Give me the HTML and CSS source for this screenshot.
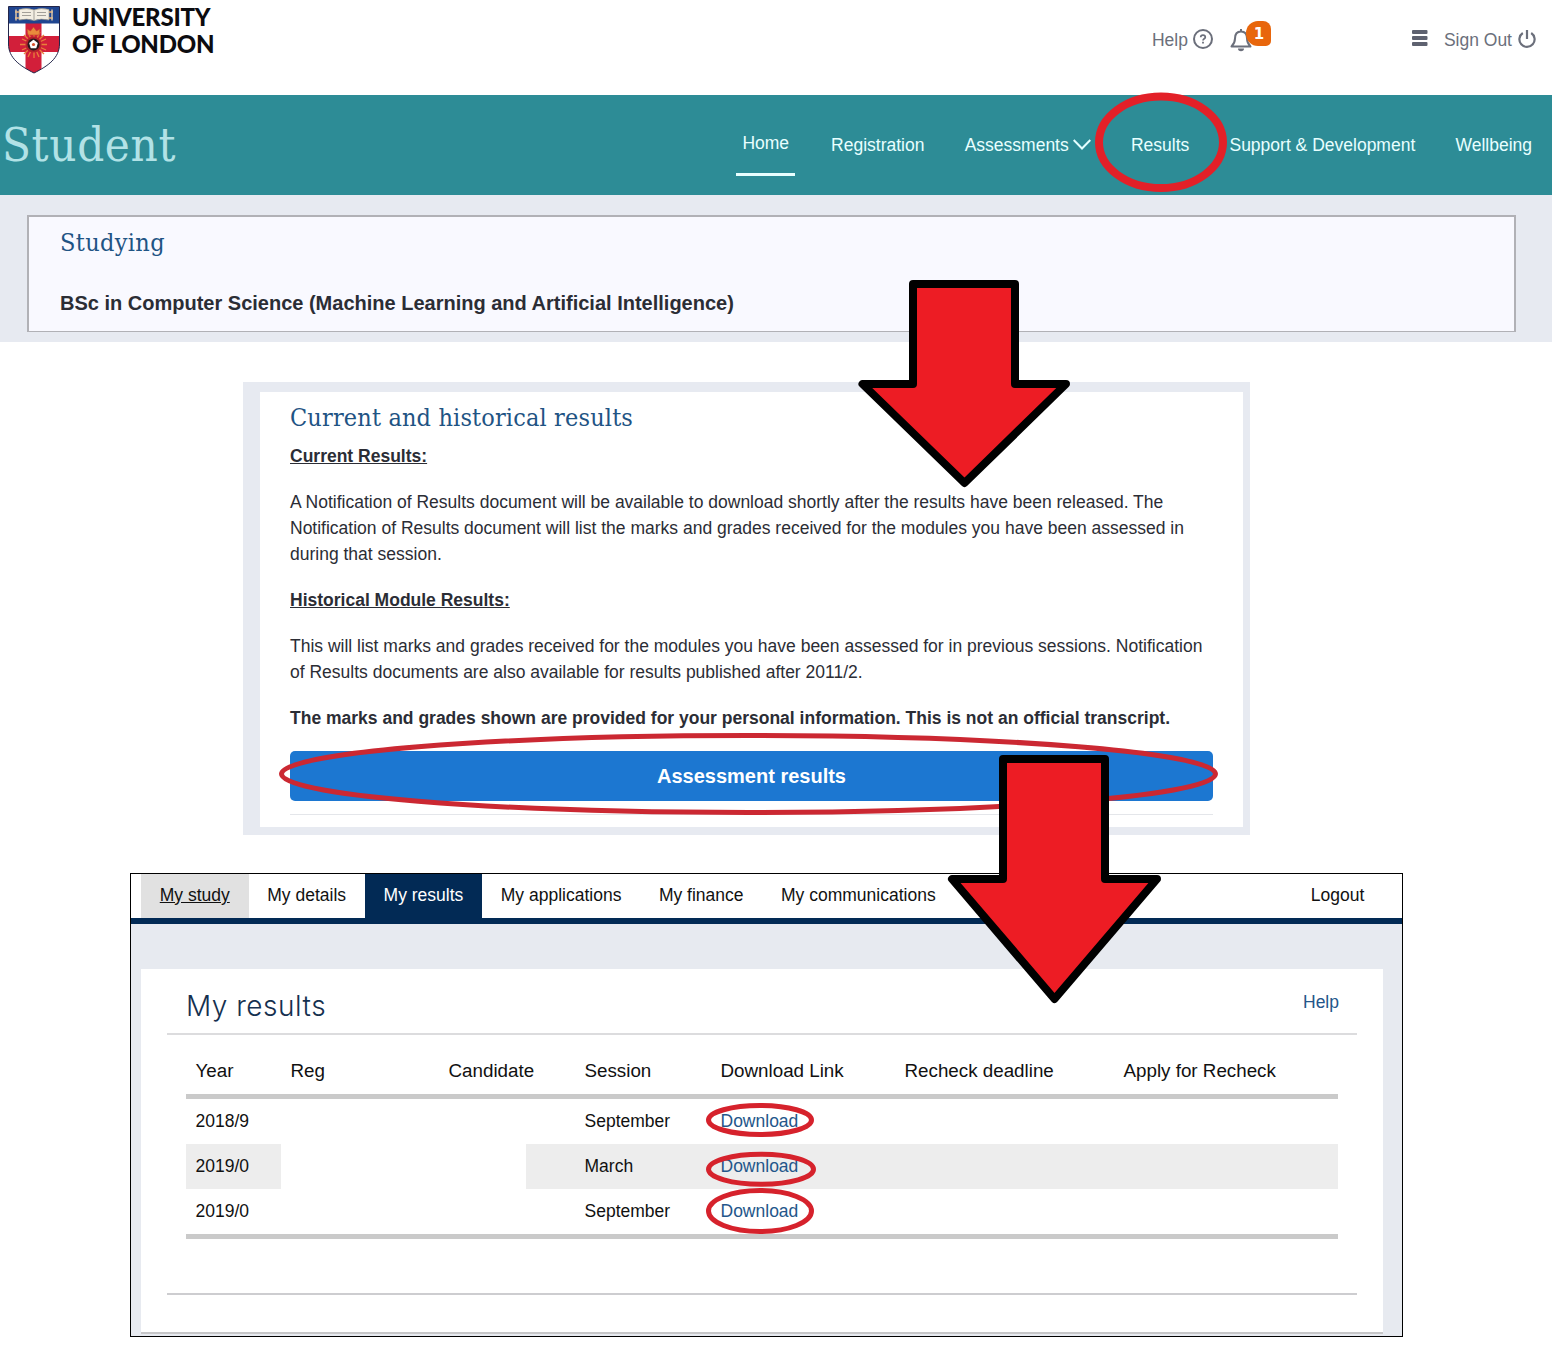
FILE: index.html
```html
<!DOCTYPE html>
<html lang="en">
<head>
<meta charset="utf-8">
<title>Student portal results</title>
<link rel="stylesheet" href="styles.css">
</head>
<body>
<header class="topbar">
  <div class="brand">
    <svg class="crest" width="52" height="68" viewBox="0 0 52 68">
      <defs><clipPath id="shield"><path d="M.5 .5H51.500V38C51.500 52 40 60 26 67C12 60 .5 52 .5 38Z"/></clipPath></defs>
      <g clip-path="url(#shield)">
        <rect width="52" height="68" fill="#fff"/>
        <rect x="17.500" y="17" width="16" height="51" fill="#d21f3a"/>
        <rect y="30" width="52" height="16" fill="#d21f3a"/>
        <rect width="52" height="17.500" fill="#1f4590"/>
      </g>
      <path d="M7 6h38M7 12h38" stroke="#c39a76" stroke-width="2"/>
      <path d="M8 3.500v11M44 3.500v11" stroke="#d9c3a8" stroke-width="1.500"/>
      <path d="M11 3.500Q19 1.500 26 4Q33 1.500 41 3.500V14Q33 12 26 14.500Q19 12 11 14Z" fill="#f3eee2" stroke="#a9a08c" stroke-width=".7"/>
      <path d="M26 4.500V14M14 6.500h9M14 9.500h9M29 6.500h9M29 9.500h9" stroke="#8e8b86" stroke-width=".8" fill="none"/>
      <g stroke="#e8803a" stroke-width="1.300"><path d="M26 25V52M12 38.500H39M16 29L36 48M36 29L16 48M20 26L31 51M32 26L20 51M14 33L38 44M38 33L14 44"/></g>
      <path d="M20 29L19 23L22.500 25L25.500 21L28.500 25L32 23L31 29Z" fill="#e98b3c" stroke="#c4472c" stroke-width=".6"/>
      <circle cx="25.500" cy="38.500" r="8" fill="#b3202c"/><circle cx="25.500" cy="38.500" r="6" fill="#2a1a1c"/>
      <path d="M25.500 34.500L29 37.300L27.700 41.500H23.300L22 37.300Z" fill="#fff" stroke="#fff" stroke-width="1.500" stroke-linejoin="round"/>
      <circle cx="25.500" cy="38.500" r="1.600" fill="#d9532f"/>
      <path d="M.5 .5H51.500V38C51.500 52 40 60 26 67C12 60 .5 52 .5 38Z" fill="none" stroke="#23264a"/>
    </svg>
    <div class="wordmark">UNIVERSITY<br>OF LONDON</div>
  </div>
  <div class="tools">
    <span>Help</span>
    <svg class="ic-help" width="20" height="20" viewBox="0 0 20 20" fill="none" stroke="#6b6f7b"><circle cx="10" cy="10" r="9" stroke-width="2"/><path d="M7.700 8.300C7.700 5.400 12.300 5.500 12.300 8.200C12.300 9.700 10 9.800 10 11.500" stroke-width="1.700"/><path d="M10 12.800v1.700" stroke-width="1.800"/></svg>
    <div class="bell">
      <svg width="22" height="24" viewBox="0 0 22 24" fill="none" stroke="#6b6f7b"><path d="M11 1v2.500M1.500 18.500C4 16 5 14 5 10.500C5 6 7.500 3.500 11 3.500S17 6 17 10.500C17 14 18 16 20.500 18.500Z" stroke-width="2" stroke-linejoin="round"/><path d="M8 20.500a3 2.800 0 0 0 6 0Z" fill="#6b6f7b" stroke="none"/></svg>
      <span class="badge">1</span>
    </div>
    <svg class="ic-menu" width="16" height="17" viewBox="0 0 16 17" fill="#5e6270"><rect y="0" width="15.500" height="4" rx="1"/><rect y="6" width="15.500" height="4" rx="1"/><rect y="12" width="15.500" height="4" rx="1"/></svg>
    <span>Sign Out</span>
    <svg class="ic-power" width="18" height="20" viewBox="0 0 18 20" fill="none" stroke="#6b6f7b" stroke-width="2.200"><path d="M9 1v9M4.800 4A7.600 7.600 0 1 0 13.200 4"/></svg>
  </div>
</header>

<nav class="mainnav">
  <div class="portal">Student</div>
  <div class="links">
    <a class="home">Home</a>
    <a class="registration">Registration</a>
    <a class="link">Assessments</a>
    <svg class="chev" width="18" height="12" viewBox="0 0 18 12" fill="none" stroke="#e4ffff" stroke-width="2"><path d="M.7 1L9 9.500L17.300 1"/></svg>
    <a class="link">Results</a>
    <a class="link">Support &amp; Development</a>
    <a class="link">Wellbeing</a>
  </div>
</nav>

<section class="studying">
  <div class="studybox">
    <h2>Studying</h2>
    <p>BSc in Computer Science (Machine Learning and Artificial Intelligence)</p>
  </div>
</section>

<section class="results">
  <div class="resultsbox">
    <h2>Current and historical results</h2>
    <h3>Current Results:</h3>
    <p>A Notification of Results document will be available to download shortly after the results have been released. The<br>Notification of Results document will list the marks and grades received for the modules you have been assessed in<br>during that session.</p>
    <h3>Historical Module Results:</h3>
    <p>This will list marks and grades received for the modules you have been assessed for in previous sessions. Notification<br>of Results documents are also available for results published after 2011/2.</p>
    <p class="strong">The marks and grades shown are provided for your personal information. This is not an official transcript.</p>
    <a class="button">Assessment results</a>
    <hr>
  </div>
</section>

<section class="records">
  <nav class="tabs">
    <a class="tab study">My study</a>
    <a class="tab">My details</a>
    <a class="tab active">My results</a>
    <a class="tab">My applications</a>
    <a class="tab">My finance</a>
    <a class="tab">My communications</a>
    <a class="tab logout">Logout</a>
  </nav>
  <div class="card">
    <div class="cardhead"><h1>My results</h1><a>Help</a></div>
    <table>
      <colgroup><col class="c1"><col class="c2"><col class="c3"><col class="c4"><col class="c5"><col class="c6"><col class="c7"></colgroup>
      <thead><tr><th>Year</th><th>Reg</th><th>Candidate</th><th>Session</th><th>Download Link</th><th>Recheck deadline</th><th>Apply for Recheck</th></tr></thead>
      <tbody>
        <tr><td>2018/9</td><td></td><td></td><td>September</td><td><a>Download</a></td><td></td><td></td></tr>
        <tr class="alt"><td>2019/0</td><td class="blank"></td><td class="partblank"></td><td>March</td><td><a>Download</a></td><td></td><td></td></tr>
        <tr><td>2019/0</td><td></td><td></td><td>September</td><td><a>Download</a></td><td></td><td></td></tr>
      </tbody>
    </table>
    <hr>
  </div>
</section>

<svg class="marks" width="1552" height="1352" viewBox="0 0 1552 1352" fill="none" stroke="#d6222c" stroke-width="5">
  <ellipse cx="1161" cy="142.300" rx="62" ry="45.700" stroke="#e32028" stroke-width="8"/>
  <ellipse cx="748.500" cy="774" rx="467" ry="38.500" stroke="#cb2832"/>
  <ellipse cx="760" cy="1120" rx="51.500" ry="14.500"/>
  <ellipse cx="761" cy="1169.300" rx="52.500" ry="15"/>
  <ellipse cx="760" cy="1211" rx="51.500" ry="20.500"/>
  <g fill="#ed1c24" stroke="#000" stroke-width="8" stroke-linejoin="round">
    <path d="M913 284H1015V384H1066L964.500 483L862.500 384H913Z"/>
    <path d="M1003 759H1105V879H1157L1054.500 999L952 879H1003Z"/>
  </g>
</svg>
</body>
</html>
```
FILE: styles.css
```css
* { box-sizing: border-box; }
body { margin: 0; width: 1552px; height: 1352px; overflow: hidden; background: #fff; font-family: "Liberation Sans", Arial, sans-serif; font-size: 17.5px; color: #2b2d35; position: relative; }
h1, h2, h3, p { margin: 0; font-weight: 400; }
a { text-decoration: none; }

.topbar { height: 95px; display: flex; justify-content: space-between; padding: 6px 16px 0 8px; }
.brand { display: flex; gap: 12px; }
.wordmark { font: 900 24px/27px Lato, sans-serif; letter-spacing: -.25px; color: #0c0c10; margin-top: -3px; }
.tools { display: flex; align-items: center; height: 68px; color: #6b6f7b; }
.ic-help { margin: -2px 0 0 5px; }
.bell { position: relative; margin-left: 17px; height: 24px; }
.badge { position: absolute; left: 16px; top: -7px; width: 25px; height: 25px; border-radius: 12px 8px 5px 12px; background: #e8660c; color: #fff; font: 700 15px/26px "DejaVu Sans", sans-serif; text-align: center; padding-left: 1px; }
.ic-menu { margin: -3px 16px 0 160px; }
.ic-power { margin: -3px 0 0 6px; }

.mainnav { height: 100px; background: #2d8c96; display: flex; justify-content: space-between; align-items: center; padding: 0 20px 0 2px; color: #e8ffff; }
.portal { font: 47px/60px "DejaVu Serif Condensed", "DejaVu Serif", serif; letter-spacing: .65px; color: #b2e2e6; }
.links { display: flex; align-items: center; }
.home { height: 62px; line-height: 59px; padding: 0 6px; border-bottom: 3px solid #e8ffff; }
.registration { margin-left: 36px; }
.link { margin-left: 40.2px; }
.chev { margin: -1px 0 0 4px; }

.studying { height: 147px; background: #e7eaf1; padding: 20px 36px 0 27px; }
.studybox { height: 117px; background: #f9f9ff; border: 2px solid #b1b1b6; border-bottom-width: 1px; padding: 8px 31px; }
h2 { font: 25px/36px "DejaVu Serif Condensed", "DejaVu Serif", serif; letter-spacing: .15px; color: #1f5484; }
.studybox h2 { letter-spacing: .35px; }
.studybox p { font-size: 20px; font-weight: 700; line-height: 24px; margin-top: 30px; }

.results { width: 1007px; height: 453px; margin: 40px 0 0 243px; background: #e7eaf1; padding: 10px 7px 8px 17px; }
.resultsbox { background: #fff; height: 435px; padding: 8px 30px 0; white-space: nowrap; line-height: 26px; }
.resultsbox h3 { font-size: 17.5px; font-weight: 700; text-decoration: underline; margin: 7px 0 20px; }
.resultsbox p { margin-bottom: 20px; }
.resultsbox p + h3 { margin-top: 0; }
.strong { font-weight: 700; }
.button { display: block; height: 50px; border-radius: 5px; background: #1c77d1; color: #fff; font-size: 20px; font-weight: 700; line-height: 50px; text-align: center; }
.resultsbox hr { border: 0; border-top: 1px solid #e4e6ea; margin: 13px 0 0; }

.records { width: 1273px; height: 464px; margin: 38px 0 0 130px; border: 1px solid #000; background: #e7eaf0; overflow: hidden; color: #111; }
.tabs { display: flex; height: 50px; background: #fff; border-bottom: 6px solid #022a55; padding: 0 19px 0 10px; }
.tab { line-height: 42px; padding: 0 18.75px; }
.study { background: #e1e1e1; text-decoration: underline; }
.active { background: #022a55; color: #fff; }
.logout { margin-left: auto; }
.card { width: 1242px; height: 365px; margin: 45px 0 0 10px; background: #fff; padding: 0 26px; border-bottom: 2px solid #c6c6c8; }
.cardhead { height: 66px; display: flex; justify-content: space-between; border-bottom: 2px solid #dcdcde; padding: 0 18px 0 19px; }
h1 { font: 300 28px/74px Inter, sans-serif; letter-spacing: .5px; color: #15304f; }
.card a { color: #24568a; }
.cardhead a { line-height: 66px; }
table { width: 1152px; margin: 0 0 0 19px; table-layout: fixed; border-collapse: separate; border-spacing: 0; border-bottom: 5px solid #cacaca; }
.c1 { width: 95px; } .c2 { width: 158px; } .c3, .c4 { width: 136px; } .c5 { width: 184px; } .c6 { width: 219px; } .c7 { width: 224px; }
th, td { padding: 0 0 0 9.5px; text-align: left; font-weight: 400; white-space: nowrap; }
th { height: 64px; padding-top: 12px; font-size: 18.8px; border-bottom: 5px solid #cacaca; }
td { height: 45px; padding-bottom: 1px; }
.alt { background: #ededed; }
.blank { background: #fff; }
.partblank { background: linear-gradient(90deg, #fff 87px, #ededed 87px); }
.card hr { border: 0; border-top: 2px solid #cdcdd0; margin: 54px 0 0; }

.marks { position: absolute; left: 0; top: 0; }
```
